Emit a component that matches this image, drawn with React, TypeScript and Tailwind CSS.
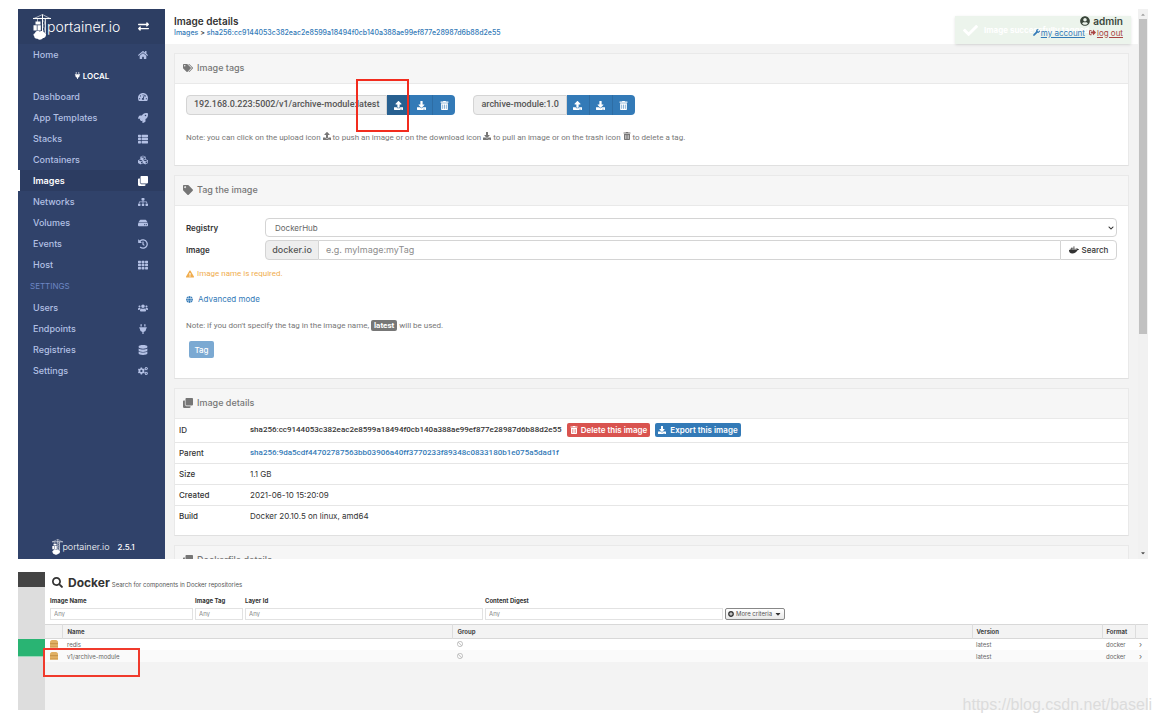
import type { ReactNode } from "react";
import type { IconType } from "react-icons";
import {
  FaBan,
  FaCaretDown,
  FaCheck,
  FaChevronDown,
  FaClone,
  FaCogs,
  FaCubes,
  FaDatabase,
  FaDocker,
  FaDownload,
  FaExchangeAlt,
  FaExclamationTriangle,
  FaGlobe,
  FaHdd,
  FaHistory,
  FaHome,
  FaPlug,
  FaPlusCircle,
  FaRocket,
  FaSearch,
  FaSignOutAlt,
  FaSitemap,
  FaTachometerAlt,
  FaTag,
  FaTags,
  FaTh,
  FaThList,
  FaTrashAlt,
  FaUpload,
  FaUserCircle,
  FaUsers,
  FaWrench,
} from "react-icons/fa";

type NavItem = { label: string; icon: IconType; active?: boolean };

const mainNav: NavItem[] = [
  { label: "Dashboard", icon: FaTachometerAlt },
  { label: "App Templates", icon: FaRocket },
  { label: "Stacks", icon: FaThList },
  { label: "Containers", icon: FaCubes },
  { label: "Images", icon: FaClone, active: true },
  { label: "Networks", icon: FaSitemap },
  { label: "Volumes", icon: FaHdd },
  { label: "Events", icon: FaHistory },
  { label: "Host", icon: FaTh },
];

const settingsNav: NavItem[] = [
  { label: "Users", icon: FaUsers },
  { label: "Endpoints", icon: FaPlug },
  { label: "Registries", icon: FaDatabase },
  { label: "Settings", icon: FaCogs },
];

const components = ["redis", "v1/archive-module"];

function CraneMark({ className }: { className: string }) {
  return (
    <svg viewBox="0 0 18 26" className={className} fill="none" aria-hidden="true">
      <path d="M0 4.500h18" stroke="currentColor" strokeWidth="1.100" />
      <path d="M1 4.500L9.500 0.500 17 4.500" stroke="currentColor" strokeWidth="0.600" />
      <path d="M9.500 0.500V18M12.300 4.500V19" stroke="currentColor" strokeWidth="1" />
      <path d="M9.500 6l2.800 3-2.800 3 2.800 3-2.800 3" stroke="currentColor" strokeWidth="0.500" />
      <path d="M4.500 4.500V8" stroke="currentColor" strokeWidth="0.600" />
      <path d="M2.500 7.500h5v3h-5zM0.500 11.200h3.300v5.300H0.500zM4.500 11.200h3.300v5.300H4.500z" fill="currentColor" />
      <path
        d="M3 17.500c1.200-1 2.600-.8 3.500 0 1.800-1 4-.5 4.700 1 1.800.3 2.300 2 1.500 3.500-.3 1.400-1.500 2-2.700 2-1.300 1.900-4 2.200-5.500.7-2 .3-3.300-.9-3.300-2.500C0 21 .3 19.500 2 19.200c0-.7.400-1.300 1-1.700z"
        fill="currentColor"
      />
    </svg>
  );
}

function NavLink({ label, icon: Icon, active }: NavItem) {
  return (
    <a
      href="#"
      className={
        active
          ? "flex h-[21px] items-center justify-between border-l-2 border-white bg-[#2c3c61] pr-4 pl-[13px] font-semibold text-white"
          : "flex h-[21px] items-center justify-between pr-4 pl-[15px] text-[#b3c0e4]"
      }
    >
      {label}
      <span className="flex w-3 justify-center">
        <Icon className="size-[10px]" />
      </span>
    </a>
  );
}

function Sidebar() {
  return (
    <aside className="flex w-[147px] shrink-0 flex-col bg-[#30426a] text-[9px] font-medium">
      <div className="flex h-[35px] items-center justify-between bg-[#2d3e63] pr-4 pl-[15px] text-white">
        <div className="flex items-center">
          <CraneMark className="h-[26px] w-[18px]" />
          <span className="-ml-1 text-[14px] leading-5 font-light">portainer.io</span>
        </div>
        <button type="button" aria-label="Toggle sidebar">
          <FaExchangeAlt className="size-[11px]" />
        </button>
      </div>
      <nav>
        <NavLink label="Home" icon={FaHome} />
        <div className="flex h-[21px] items-center justify-center gap-[2px] text-[8px] font-semibold text-white">
          <FaPlug className="size-[7px]" />
          LOCAL
        </div>
        {mainNav.map((item) => (
          <NavLink key={item.label} {...item} />
        ))}
        <div className="flex h-[22px] items-center pl-3 text-[8px] font-normal text-[#6d86c4]">SETTINGS</div>
        {settingsNav.map((item) => (
          <NavLink key={item.label} {...item} />
        ))}
      </nav>
      <div className="mt-auto flex items-center justify-center pb-1 pl-1 text-white">
        <CraneMark className="h-4 w-[11px]" />
        <span className="-ml-px text-[9px] font-light">portainer.io</span>
        <span className="ml-2 text-[8px]">2.5.1</span>
      </div>
    </aside>
  );
}

function TopBar() {
  return (
    <header className="relative flex h-[35px] shrink-0 items-center justify-between bg-white pr-[15px] pl-[9px]">
      <div>
        <h1 className="text-[10px] leading-3 font-semibold text-[#333]">Image details</h1>
        <p className="text-[7px] leading-3 font-medium text-[#337ab7]">
          <a href="#">Images</a> <span className="text-[#333]">&gt;</span>{" "}
          <a href="#">sha256:cc9144053c382eac2e8599a18494f0cb140a388ae99ef877e28987d6b88d2e55</a>
        </p>
      </div>
      {/* fading toast, sits behind the user menu */}
      <div
        role="status"
        className="absolute top-[7px] right-[7px] flex h-7 w-44 items-center gap-[6px] bg-[#ecf4ec] pl-2 text-[8px] font-bold text-white shadow-sm"
      >
        <FaCheck className="size-[15px]" />
        Image successfully tagged
      </div>
      <div className="relative text-right">
        <div className="flex items-center justify-end gap-[3px] text-[10px] leading-3 font-semibold text-[#3b463b]">
          <FaUserCircle className="size-[10px]" />
          admin
        </div>
        <div className="flex items-center gap-1 text-[8px] leading-3">
          <a href="#" className="flex items-center text-[#337ab7] underline">
            <FaWrench className="mr-px size-[7px]" />
            my account
          </a>
          <a href="#" className="flex items-center text-[#a94442] underline">
            <FaSignOutAlt className="mr-px size-[7px]" />
            log out
          </a>
        </div>
      </div>
    </header>
  );
}

function Widget({ icon: Icon, title, children }: { icon: IconType; title: string; children?: ReactNode }) {
  return (
    <section className="shrink-0 border border-[#e9e9e9] border-b-[#e0e0e0] bg-white">
      <h2 className="flex h-[30px] items-center gap-1 border-b border-[#e9e9e9] bg-[#f6f6f6] pb-px pl-2 text-[9px] font-medium text-[#767676]">
        <Icon className="size-[10px]" />
        {title}
      </h2>
      {children}
    </section>
  );
}

function ImageTag({ name, pushed }: { name: string; pushed?: boolean }) {
  return (
    <div className="flex h-5 text-[#555]">
      <span className="flex items-center rounded-l-sm border border-[#d4d4d4] bg-[#eee] px-[7px] font-['Roboto','Noto_Sans',sans-serif] text-[9px] font-medium">
        {name}
      </span>
      <button
        type="button"
        aria-label="Push tag"
        className={
          pushed
            ? "relative flex w-[23px] items-center justify-center bg-[#286090] text-white"
            : "flex w-[23px] items-center justify-center border-r border-[#2e6da4] bg-[#337ab7] text-white"
        }
      >
        <FaUpload className="size-[9px]" />
        {pushed && <span className="absolute -top-4 right-px h-[53px] w-[53px] border-2 border-[#f22c1e]" />}
      </button>
      <button
        type="button"
        aria-label="Pull tag"
        className="flex w-[23px] items-center justify-center border-r border-[#2e6da4] bg-[#337ab7] text-white"
      >
        <FaDownload className="size-[9px]" />
      </button>
      <button
        type="button"
        aria-label="Delete tag"
        className="flex w-[22px] items-center justify-center rounded-r-sm bg-[#337ab7] text-white"
      >
        <FaTrashAlt className="size-[9px]" />
      </button>
    </div>
  );
}

function TagForm() {
  return (
    <form className="px-[11px] pt-3 pb-5 text-[8px] text-[#333]">
      <div className="flex items-center">
        <label htmlFor="registry" className="w-[79px] shrink-0 font-semibold">
          Registry
        </label>
        <div className="relative flex-1">
          <select
            id="registry"
            className="block h-[19px] w-full appearance-none rounded-sm border border-[#d4d4d4] bg-white px-[9px] text-[#666]"
          >
            <option>DockerHub</option>
          </select>
          <FaChevronDown className="pointer-events-none absolute top-[7px] right-[3px] size-[6px] text-[#333]" />
        </div>
      </div>
      <div className="mt-[3px] flex items-center">
        <label htmlFor="image" className="w-[79px] shrink-0 font-semibold">
          Image
        </label>
        <div className="flex h-5 flex-1 text-[9px]">
          <span className="flex w-[54px] items-center justify-center rounded-l-sm border border-[#d4d4d4] bg-[#eee] font-medium text-[#555]">
            docker.io
          </span>
          <input
            id="image"
            type="text"
            placeholder="e.g. myImage:myTag"
            className="min-w-0 flex-1 border-y border-[#d4d4d4] px-[7px] placeholder:text-[#8d8d8d]"
          />
          <button
            type="button"
            className="flex w-[57px] items-center justify-center gap-[3px] rounded-r-sm border border-[#d4d4d4] bg-white text-[8px] font-medium"
          >
            <FaDocker className="size-[10px]" />
            Search
          </button>
        </div>
      </div>
      <p className="mt-2 flex items-center gap-[3px] font-['Roboto','Noto_Sans',sans-serif] leading-3 text-[#f0ad4e]">
        <FaExclamationTriangle className="size-[8px]" />
        Image name is required.
      </p>
      <a href="#" className="mt-[13px] flex items-center gap-[5px] leading-3 text-[#337ab7]">
        <FaGlobe className="size-[7px]" />
        Advanced mode
      </a>
      <p className="mt-[15px] font-['Roboto','Noto_Sans',sans-serif] leading-3 text-[#777]">
        Note: if you don't specify the tag in the image name,{" "}
        <span className="rounded-[2px] bg-[#777] px-[3px] py-px font-bold text-white">latest</span> will be used.
      </p>
      <button
        type="button"
        className="mt-[9px] ml-[3px] flex h-[17px] w-[25px] items-center justify-center rounded-[2px] bg-[#7ba9d2] text-[8px] font-medium text-white"
      >
        Tag
      </button>
    </form>
  );
}

function DetailRow({ label, children }: { label: string; children: ReactNode }) {
  return (
    <tr className="h-[21px] border-b border-[#e6e6e6] last:border-0">
      <th scope="row" className="w-[75px] pl-1 text-left font-medium">
        {label}
      </th>
      <td>{children}</td>
    </tr>
  );
}

function DetailTable() {
  return (
    <table className="mb-[9px] w-full border-collapse text-[8px] leading-3 text-[#333]">
      <tbody>
        <tr className="h-[23px] border-b border-[#e6e6e6]">
          <th scope="row" className="w-[75px] pl-1 text-left font-medium">
            ID
          </th>
          <td>
            <div className="flex items-center gap-[5px]">
              <span className="font-['Roboto','Noto_Sans',sans-serif] font-medium">
                sha256:cc9144053c382eac2e8599a18494f0cb140a388ae99ef877e28987d6b88d2e55
              </span>
              <button
                type="button"
                className="flex h-[14px] items-center gap-[3px] rounded-[2px] bg-[#d9534f] px-[3px] font-semibold text-white"
              >
                <FaTrashAlt className="size-[8px]" />
                Delete this image
              </button>
              <button
                type="button"
                className="flex h-[14px] items-center gap-1 rounded-[2px] bg-[#337ab7] px-[3px] font-semibold text-white"
              >
                <FaDownload className="size-[8px]" />
                Export this image
              </button>
            </div>
          </td>
        </tr>
        <DetailRow label="Parent">
          <a href="#" className="font-['Roboto','Noto_Sans',sans-serif] font-medium text-[#337ab7]">
            sha256:9da5cdf44702787563bb03906a40ff3770233f89348c0833180b1e075a5dad1f
          </a>
        </DetailRow>
        <DetailRow label="Size">1.1 GB</DetailRow>
        <DetailRow label="Created">2021-06-10 15:20:09</DetailRow>
        <DetailRow label="Build">Docker 20.10.5 on linux, amd64</DetailRow>
      </tbody>
    </table>
  );
}

function Scrollbar() {
  return (
    <div className="flex w-[10px] shrink-0 flex-col items-center bg-[#f1f1f1] py-[3px] text-[#505050]">
      <FaCaretDown className="size-[6px] rotate-180 text-[#a3a3a3]" />
      <div className="mt-px h-[58%] w-2 bg-[#c1c1c1]" />
      <FaCaretDown className="mt-auto size-[6px]" />
    </div>
  );
}

function PortainerWindow() {
  return (
    <div className="flex min-h-0 flex-1 overflow-hidden">
      <Sidebar />
      <main className="flex min-w-0 flex-1 flex-col bg-[#f3f3f3]">
        <TopBar />
        <div className="flex min-h-0 flex-1 flex-col gap-[9px] overflow-hidden p-[9px]">
          <Widget icon={FaTags} title="Image tags">
            <div className="px-[11px] pt-[11px] pb-[21px]">
              <div className="flex gap-[18px]">
                <ImageTag name="192.168.0.223:5002/v1/archive-module:latest" pushed />
                <ImageTag name="archive-module:1.0" />
              </div>
              <p className="mt-[17px] font-['Roboto','Noto_Sans',sans-serif] text-[8px] leading-3 text-[#777]">
                Note: you can click on the upload icon <FaUpload className="inline size-[8px] align-baseline" /> to push
                an image or on the download icon <FaDownload className="inline size-[8px] align-baseline" /> to pull an
                image or on the trash icon <FaTrashAlt className="inline size-[8px] align-baseline" /> to delete a tag.
              </p>
            </div>
          </Widget>
          <Widget icon={FaTag} title="Tag the image">
            <TagForm />
          </Widget>
          <Widget icon={FaClone} title="Image details">
            <DetailTable />
          </Widget>
          <Widget icon={FaClone} title="Dockerfile details" />
        </div>
      </main>
      <Scrollbar />
    </div>
  );
}

function Criteria({ id, label, className }: { id: string; label: string; className: string }) {
  return (
    <div className={className}>
      <label htmlFor={id} className="block text-[6px] leading-[8px] font-bold text-[#333]">
        {label}
      </label>
      <input
        id={id}
        type="text"
        placeholder="Any"
        className="mt-[3px] block h-3 w-full border border-[#e2e2e2] px-[3px] text-[6px] placeholder:text-[#888]"
      />
    </div>
  );
}

function RepositorySearch() {
  return (
    <div className="flex shrink-0">
      <div className="flex w-[27px] shrink-0 flex-col bg-[#ddd]">
        <div className="h-[15px] bg-[#444]" />
        <div className="mt-[52px] h-[18px] border-b border-[#9bd8bb] bg-[#29b473]" />
      </div>
      <div className="min-w-0 flex-1 bg-[#f3f3f3] pb-[48px]">
        <div className="bg-white px-[5px] pt-[3px] pb-1">
          <div className="flex h-[22px] items-start text-[#333]">
            <FaSearch className="mx-[2px] mt-[2px] size-[11px]" />
            <h2 className="ml-[3px] text-[12px] leading-4 font-bold">Docker</h2>
            <p className="ml-[2px] text-[6px] leading-[20px] text-[#555]">Search for components in Docker repositories</p>
          </div>
          <div className="flex items-end gap-[2px]">
            <Criteria id="image-name" label="Image Name" className="w-[143px]" />
            <Criteria id="image-tag" label="Image Tag" className="w-12" />
            <Criteria id="layer-id" label="Layer Id" className="w-[238px]" />
            <Criteria id="digest" label="Content Digest" className="w-[238px]" />
            <button
              type="button"
              className="flex h-3 items-center gap-[2px] rounded-[2px] border border-[#888] bg-linear-to-b from-white to-[#e8e8e8] px-[2px] text-[6px] text-[#555]"
            >
              <FaPlusCircle className="size-[6px] text-[#333]" />
              More criteria
              <FaCaretDown className="size-[8px] text-[#333]" />
            </button>
          </div>
        </div>
        <div className="relative">
          <table className="w-full table-fixed border-collapse text-left text-[6px] text-[#666]">
            <thead>
              <tr className="h-[14px] border-y border-[#d8d8d8] bg-[#f3f3f3] text-[#444]">
                <th className="w-[17px] border-r border-[#ddd]" aria-label="Icon" />
                <th className="w-[390px] border-r border-[#ddd] pl-[5px]">Name</th>
                <th className="border-r border-[#ddd] pl-[5px]">Group</th>
                <th className="w-[130px] border-r border-[#ddd] pl-1">Version</th>
                <th className="w-[33px] border-r border-[#ddd] pl-1">Format</th>
                <th className="w-[13px]" aria-label="Open" />
              </tr>
            </thead>
            <tbody>
              {components.map((name) => (
                <tr key={name} className="h-3 bg-white even:bg-[#fafafa]">
                  <td className="pl-[5px]">
                    <svg viewBox="0 0 8 8" className="size-2" aria-hidden="true">
                      <path d="M2 0h4c1 0 2 1 2 2v5.500H0V2C0 1 1 0 2 0z" fill="#e0b064" />
                      <path d="M0 3h8v1.200H0z" fill="#c8954a" />
                      <path d="M0 6.300h8v1.200H0z" fill="#d39d4e" />
                    </svg>
                  </td>
                  <td className="pl-[5px]">{name}</td>
                  <td className="pl-[5px]">
                    <FaBan className="size-[6px] text-[#bbb]" />
                  </td>
                  <td className="pl-1">latest</td>
                  <td className="pl-1">docker</td>
                  <td className="pl-1 text-[8px] leading-[8px]">›</td>
                </tr>
              ))}
            </tbody>
          </table>
          <div className="pointer-events-none absolute top-6 -left-[2px] h-[29px] w-[97px] border-2 border-[#f03a2c]" />
        </div>
      </div>
    </div>
  );
}

export default function App() {
  return (
    <div className="relative flex h-screen flex-col gap-[13px] overflow-hidden bg-white pt-[9px] pr-3 pb-[13px] pl-[18px] font-['Inter','Noto_Sans',sans-serif]">
      <PortainerWindow />
      <RepositorySearch />
      <div className="pointer-events-none absolute right-2 bottom-[6px] font-['Liberation_Sans',sans-serif] text-[16px] leading-6 text-[#dcdcdc]">
        https://blog.csdn.net/baseli
      </div>
    </div>
  );
}
